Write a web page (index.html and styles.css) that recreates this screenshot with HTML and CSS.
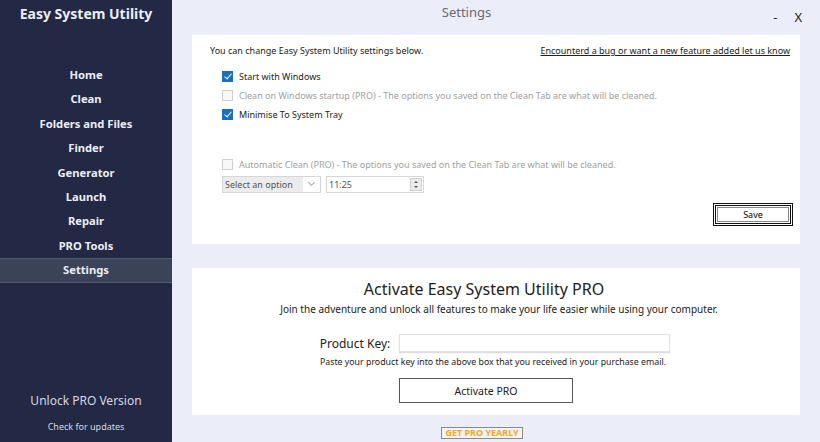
FILE: index.html
```html
<!DOCTYPE html>
<html lang="en">
<head>
    <meta charset="UTF-8">
    <title>Easy System Utility - Settings</title>
    <link rel="stylesheet" href="styles.css">
</head>
<body>
    <div class="app">
        <nav class="sidebar">
            <div class="brand">Easy System Utility</div>
            <ul class="menu">
                <li>Home</li>
                <li>Clean</li>
                <li>Folders and Files</li>
                <li>Finder</li>
                <li>Generator</li>
                <li>Launch</li>
                <li>Repair</li>
                <li>PRO Tools</li>
                <li class="active">Settings</li>
            </ul>
            <div class="unlock">Unlock PRO Version</div>
            <div class="updates">Check for updates</div>
        </nav>

        <main class="main">
            <header class="topbar">
                <span class="page-title">Settings</span>
                <span class="win-btns"><span>-</span><span>X</span></span>
            </header>

            <section class="panel settings">
                <div class="settings-head">
                    <span>You can change Easy System Utility settings below.</span>
                    <a href="#">Encounterd a bug or want a new feature added let us know</a>
                </div>
                <div class="options">
                    <label class="check"><span class="box on"></span>Start with Windows</label>
                    <label class="check off"><span class="box"></span>Clean on Windows startup (PRO) - The options you saved on the Clean Tab are what will be cleaned.</label>
                    <label class="check"><span class="box on"></span>Minimise To System Tray</label>
                    <label class="check off auto"><span class="box"></span>Automatic Clean (PRO) - The options you saved on the Clean Tab are what will be cleaned.</label>
                    <div class="schedule">
                        <div class="fake-select">Select an option<span class="chev"></span></div>
                        <div class="fake-time">11:25<span class="spin"></span></div>
                    </div>
                </div>
                <div class="save-row">
                    <button class="save">Save</button>
                </div>
            </section>

            <section class="panel pro">
                <h2>Activate Easy System Utility PRO</h2>
                <p class="lead">Join the adventure and unlock all features to make your life easier while using your computer.</p>
                <div class="key-row">
                    <label>Product Key:</label>
                    <input type="text" class="key-input">
                </div>
                <p class="hint">Paste your product key into the above box that you received in your purchase email.</p>
                <button class="activate">Activate PRO</button>
            </section>

            <div class="yearly-row">
                <button class="yearly">GET PRO YEARLY</button>
            </div>
        </main>
    </div>
</body>
</html>
```

FILE: styles.css
```css
* { box-sizing: border-box; }
body { margin: 0; background: #ebeef8; font-family: "Noto Sans", "Open Sans", sans-serif; color: #222; overflow: hidden; }
.app { display: flex; width: 820px; height: 442px; }

/* sidebar */
.sidebar { width: 172px; flex-shrink: 0; background: #232844; color: #eceef4; display: flex; flex-direction: column; text-align: center; }
.brand { font-weight: bold; font-size: 14px; margin-top: 4px; height: 59px; }
.menu { list-style: none; margin: 0; padding: 0; }
.menu li { font-weight: bold; font-size: 11.2px; height: 24.4px; line-height: 24px; }
.menu li.active { background: #3b4358; border-top: 1px solid #535b6e; border-bottom: 1px solid #535b6e; line-height: 22px; }
.unlock { margin-top: auto; font-size: 12px; color: #d6d8e0; }
.updates { font-size: 9px; margin: 11px 0 9px; color: #d6d8e0; }

/* main area */
.main { flex: 1; display: flex; flex-direction: column; padding: 0 20px 0 20px; }
.main > * { flex-shrink: 0; }
.topbar { height: 35px; position: relative; text-align: center; }
.page-title { display: inline-block; color: #6a6a70; font-size: 13px; margin: 2px 0 0 -59px; }
.win-btns { position: absolute; right: -2px; top: 8px; font-size: 13px; color: #222; display: flex; gap: 17px; }

.panel { background: #fff; }
.settings { height: 209px; padding: 9px 10px 0 18px; font-size: 9px; }
.settings-head { display: flex; justify-content: space-between; }
.settings-head a { color: #222; }
.options { padding-left: 12px; margin-top: 10px; }
.check { display: flex; align-items: center; gap: 6px; height: 19px; }
.check.off { color: #a0a0a0; }
.check.auto { margin-top: 31px; }
.box { width: 11px; height: 11px; border: 1px solid #cfcfcf; background: #f8f8f8; position: relative; }
.box.on { background: #1a6fc2; border-color: #1a6fc2; }
.box.on::after { content: ""; position: absolute; left: 3px; top: 0px; width: 3px; height: 6px; border: solid #fff; border-width: 0 1.4px 1.4px 0; transform: rotate(40deg); }
.schedule { display: flex; gap: 5px; margin-top: 2px; }
.fake-select { width: 99px; height: 17px; border: 1px solid #d6d6d6; background: #ececec; color: #555; padding: 1px 2px; position: relative; }
.chev { position: absolute; right: 0; top: 0; width: 17px; height: 15px; background: #fff; }
.chev::after { content: ""; position: absolute; left: 6px; top: 3px; width: 4px; height: 4px; border: solid #aaa; border-width: 0 1px 1px 0; transform: rotate(45deg); }
.fake-time { width: 98px; height: 17px; border: 1px solid #d6d6d6; color: #555; padding: 1px 2px; position: relative; }
.spin { position: absolute; right: 1px; top: 1px; width: 12px; height: 13px; background: #ececec; border: 1px solid #d0d0d0; }
.spin::before { content: ""; position: absolute; left: 3px; top: 2px; border: 2px solid transparent; border-bottom: 2px solid #555; border-top: 0; }
.spin::after { content: ""; position: absolute; left: 3px; top: 7px; border: 2px solid transparent; border-top: 2px solid #555; border-bottom: 0; }
.save-row { display: flex; justify-content: flex-end; margin-top: 10px; }
.save { width: 80px; height: 23px; border: 3px double #111; outline: none; background: #fff; font: 9px "Noto Sans", sans-serif; padding: 0; margin-right: -3px; box-shadow: inset 0 0 0 1px #fff, inset 0 0 0 2px #888; }

.pro { margin-top: 24px; height: 147px; text-align: center; padding-top: 10px; }
.pro h2 { font-weight: normal; font-size: 16px; margin: 0 0 2px -24px; color: #222; }
.lead { font-size: 10px; margin: 1px 0 0 6px; }
.key-row { display: flex; justify-content: center; align-items: center; gap: 9px; margin: 18px 0 0 -2px; }
.key-row label { font-size: 12px; }
.key-input { width: 271px; height: 18px; border: 1px solid #e2e2e2; box-shadow: 0 1px 1px #ddd; }
.hint { font-size: 8.8px; margin: 4px 0 0 -6px; }
.activate { width: 174px; height: 25px; margin: 10px 0 0 -20px; border: 1px solid #555; background: #fff; font: 10.5px "Noto Sans", sans-serif; color: #222; }

.yearly-row { display: flex; justify-content: center; margin-top: 12px; }
.yearly { font: bold 9px "Noto Sans", sans-serif; color: #f5a623; background: #f4f4f6; border: 1px solid #8a8a8a; padding: 0 3px; height: 12px; line-height: 10px; margin-left: -28px; }
```
